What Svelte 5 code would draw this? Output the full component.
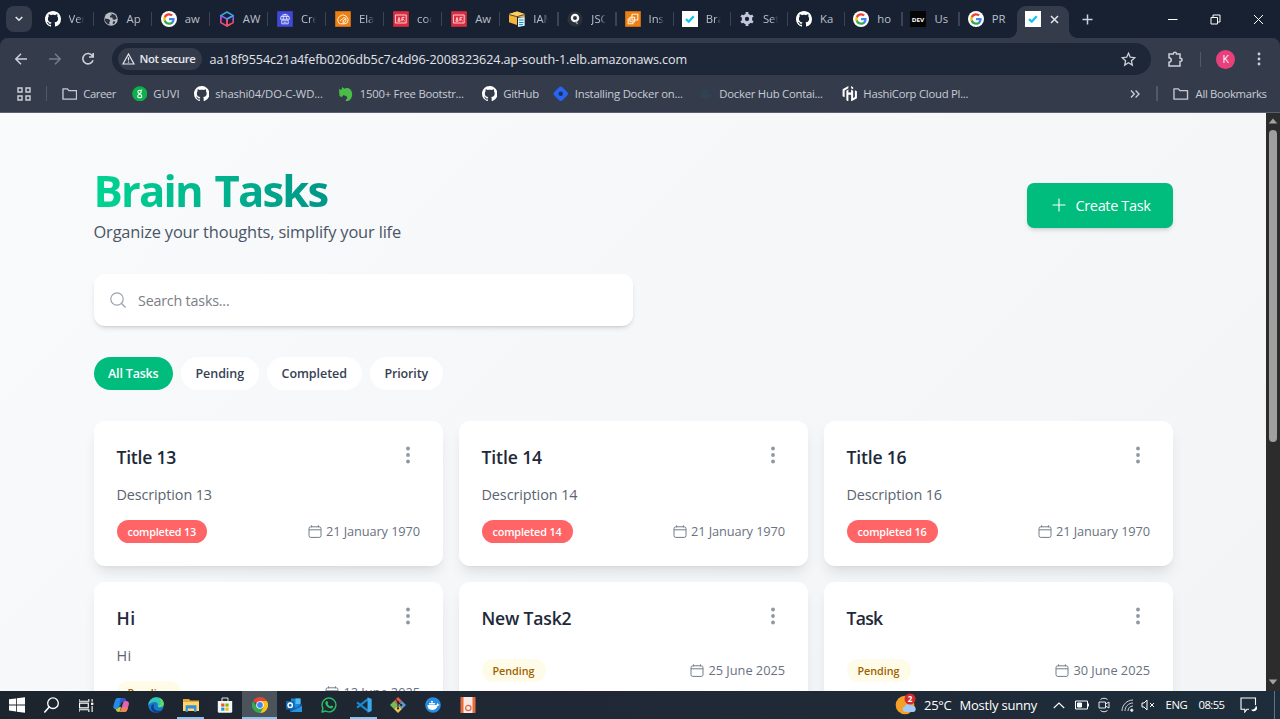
<script>
  const tabs = [
    ['github', 'Ver'], ['globe', 'Ap'], ['google', 'aw'], ['cube', 'AW'], ['elb', 'Cre'],
    ['elastic', 'Ela'], ['code', 'coc'], ['code', 'Aw'], ['iam', 'IAM'], ['json', 'JSC'],
    ['ec2', 'Ins'], ['check', 'Bra'], ['gear', 'Set'], ['github', 'Ka'], ['google', 'ho'],
    ['dev', 'Us'], ['google', 'PR']
  ];
  const bookmarks = [
    { icon: 'folder', label: 'Career', w: 32.5, x: 62 },
    { icon: 'guvi', label: 'GUVI', w: 26.5, x: 132 },
    { icon: 'github', label: 'shashi04/DO-C-WD...', w: 107.5, x: 194 },
    { icon: 'horse', label: '1500+ Free Bootstr...', w: 104, x: 338.5 },
    { icon: 'github', label: 'GitHub', w: 35.5, x: 482 },
    { icon: 'diamond', label: 'Installing Docker on...', w: 108, x: 553.5 },
    { icon: 'whale', label: 'Docker Hub Contai...', w: 103.5, x: 698 },
    { icon: 'hashi', label: 'HashiCorp Cloud Pl...', w: 105, x: 842 }
  ].map((b, i, all) => ({ ...b, slot: (all[i + 1]?.x ?? 1000) - b.x }));

  const filters = [
    { label: 'All Tasks', w: 50.5, box: 79.5 },
    { label: 'Pending', w: 48.5, box: 78.5 },
    { label: 'Completed', w: 65.5, box: 95.5 },
    { label: 'Priority', w: 43.5, box: 73.5 }
  ];
  const tasks = [
    { title: 'Title 13', tw: 59.5, desc: 'Description 13', dw: 95.5, badge: 'completed 13', bw: 68.5, done: true, date: '21 January 1970', w: 94 },
    { title: 'Title 14', tw: 60.5, desc: 'Description 14', dw: 96, badge: 'completed 14', bw: 69, done: true, date: '21 January 1970', w: 94 },
    { title: 'Title 16', tw: 60, desc: 'Description 16', dw: 95.5, badge: 'completed 16', bw: 69, done: true, date: '21 January 1970', w: 94 },
    { title: 'Hi', tw: 19, desc: 'Hi', dw: 15, badge: 'Pending', bw: 42, date: '12 June 2025', w: 76.5 },
    { title: 'New Task2', tw: 90, desc: '', dw: 0, badge: 'Pending', bw: 42, date: '25 June 2025', w: 76.5 },
    { title: 'Task', tw: 36, desc: '', dw: 0, badge: 'Pending', bw: 42, date: '30 June 2025', w: 76.5 }
  ];
  const apps = ['windows', 'lens', 'taskview', 'copilot', 'edge', 'explorer', 'store', 'chrome', 'outlook', 'whatsapp', 'vscode', 'git', 'docker', 'ubuntu'];
  const open = ['explorer', 'chrome', 'vscode'];

  // Tracks the letters so that a label occupies the given width.
  function fit(node, width) {
    if (!width) return;
    const natural = node.getBoundingClientRect().width;
    node.style.letterSpacing = `${(width - natural) / node.textContent.length}px`;
  }
</script>

{#snippet icon(name, size = 16)}
  <svg class="icon" width={size} height={size} viewBox="0 0 16 16" fill="none" stroke-linecap="round" stroke-linejoin="round">
    {#if name === 'github'}
      <path fill="#fff" d="M8 0C3.58 0 0 3.58 0 8c0 3.54 2.29 6.53 5.47 7.59.4.07.55-.17.55-.38 0-.19-.01-.82-.01-1.49-2.01.37-2.53-.49-2.69-.94-.09-.23-.48-.94-.82-1.13-.28-.15-.68-.52-.01-.53.63-.01 1.08.58 1.23.82.72 1.21 1.87.87 2.33.66.07-.52.28-.87.51-1.07-1.78-.2-3.64-.89-3.64-3.95 0-.87.31-1.59.82-2.15-.08-.2-.36-1.02.08-2.12 0 0 .67-.21 2.2.82.64-.18 1.32-.27 2-.27s1.36.09 2 .27c1.53-1.04 2.2-.82 2.2-.82.44 1.1.16 1.92.08 2.12.51.56.82 1.27.82 2.15 0 3.07-1.87 3.75-3.65 3.95.29.25.54.73.54 1.48 0 1.07-.01 1.93-.01 2.2 0 .21.15.46.55.38A8.01 8.01 0 0016 8c0-4.42-3.58-8-8-8z" />
    {:else if name === 'globe'}
      <circle cx="8" cy="8" r="6.8" fill="#b9bdc5" />
      <path fill="#293142" d="M1.8 7.6l3.6.3 2 1.6-1 1.4v2.7C3.6 13 1.6 10.4 1.8 7.6zM8.2 2.5l4 1.6 1.6 3.4-2 1.2-2-.3-.5-1.8-2.1-.2-.3-1.6 1.8-.5zM10 10.3l2.4.2-.9 1.9-1.8.9z" />
    {:else if name === 'google'}
      <circle cx="8" cy="8" r="8" fill="#fff" />
      <g transform="translate(1.7 1.6) scale(.53)">
        <path fill="#4285f4" d="M22.56 12.25c0-.78-.07-1.53-.2-2.25H12v4.26h5.92a5.06 5.06 0 01-2.2 3.32v2.77h3.57c2.08-1.92 3.27-4.74 3.27-8.1z" />
        <path fill="#34a853" d="M12 23c2.97 0 5.46-.98 7.28-2.66l-3.57-2.77c-.98.66-2.23 1.06-3.71 1.06-2.86 0-5.29-1.93-6.16-4.53H2.18v2.84A11 11 0 0012 23z" />
        <path fill="#fbbc05" d="M5.84 14.1a6.6 6.6 0 010-4.2V7.06H2.18a11 11 0 000 9.88z" />
        <path fill="#ea4335" d="M12 5.38c1.62 0 3.06.56 4.21 1.64l3.15-3.15A11 11 0 002.18 7.06L5.84 9.9C6.71 7.3 9.14 5.38 12 5.38z" />
      </g>
    {:else if name === 'cube'}
      <path stroke="#ed4b9b" stroke-width="1.5" d="M8 8v7l-6.2-3.4V4.7M8 15l3-1.6" />
      <path stroke="#f0525a" stroke-width="1.5" d="M8 8v7l6.2-3.4V9" />
      <path stroke="#9c5af0" stroke-width="1.5" d="M1.8 8V4.7L8 8l6.2-3.4V9" />
      <path stroke="#35a9ee" stroke-width="1.5" d="M1.8 4.6L8 1l6.2 3.6L8 8" />
    {:else if name === 'elb'}
      <path fill="#4148d5" d="M.2.2h15.6v15.6H.2z" />
      <g stroke="#dfe5ff" stroke-width=".9"><path d="M3.5 7.8a4.5 4.5 0 019 0zM6.3 7.8c0-2 .5-3.4 1.7-4.4 1.2 1 1.7 2.4 1.7 4.4M4.2 5.6h7.6M4.8 9.6v3.2h6.4V9.6zM6.8 11.2h2.4" /></g>
    {:else if name === 'elastic'}
      <path fill="#ee7f12" d="M.2.2h15.6v15.6H.2z" />
      <path stroke="#fff2dd" stroke-width="1" d="M4 12.3a5.1 5.1 0 118.4-.6L10 12.8H6zM5.2 9.6L9 6.6l1.9.8v2.7l-2.6 2.2M8.2 9.6V12M8.2 9.6l2.6-2" />
    {:else if name === 'code'}
      <path fill="#dc2d40" d="M.2.2h15.6v15.6H.2z" />
      <path stroke="#ffdfe3" stroke-width=".9" d="M2.8 4h10.4v8H2.8zM5 9.8l1-3.4 1 3.4zM9 9.8V6.4h2M9 8.3h1.6M11.2 9.8v.1" />
    {:else if name === 'iam'}
      <path fill="#f5b536" d="M0 3l8-2.5L15.6 3v3H8v8L0 11.3z" />
      <path fill="#ffcf61" d="M0 3L8 .5 15.6 3 8 5z" />
      <path stroke="#293142" stroke-width=".8" d="M.5 3.7L8 5.7l7-2" />
      <path fill="#d9f1fc" d="M9 6.8l6.7-.8v8.8L9 16z" />
      <path stroke="#168fcb" d="M10.5 9h3.6M10.5 11.5h3.6M10.5 13.6h3" />
    {:else if name === 'json'}
      <circle cx="8" cy="8" r="7.6" fill="#2b303b" /><circle cx="8" cy="7" r="3.1" stroke="#f6f7fa" stroke-width="2.3" /><path stroke="#aaa" stroke-width="1.4" d="M9 10.8l1.2 1.6" />
    {:else if name === 'ec2'}
      <path fill="#ee7f12" d="M.2.2h15.6v15.6H.2z" />
      <path stroke="#fff2df" stroke-width="1.1" d="M7 3.2h5.8V9H7zM5 6.2h4.6v4.6H5zM5 8H3.2v4.8H8v-2" />
    {:else if name === 'check'}
      <path fill="#fff" d="M0 0h16v16H0z" /><path stroke="#12c4ed" stroke-width="2.3" stroke-linecap="butt" d="M4 8.2l2.7 2.5 5-5.4" />
    {:else if name === 'gear'}
      <circle cx="8" cy="8" r="3.7" stroke="#c2c7dc" stroke-width="3.1" />
      <path stroke="#c2c7dc" stroke-width="2.8" stroke-linecap="butt" d="M8 1.1v3M8 12v3M2.1 4.6l2.6 1.5M11.3 9.9l2.6 1.5M2.1 11.4l2.6-1.5M11.3 6.1l2.6-1.5" />
    {:else if name === 'dev'}
      <path fill="#050505" d="M0 0h16v16H0z" /><text x="8" y="10.6" class="dev" textLength="12.5" lengthAdjust="spacingAndGlyphs">DEV</text>
    {:else if name === 'folder'}
      <path stroke="#c5cad4" stroke-width="1.4" d="M1 3h4.6l1.5 1.8H15v8.8H1z" />
    {:else if name === 'guvi'}
      <circle cx="8" cy="8" r="7.8" fill="#0db14b" /><circle cx="7.8" cy="6" r="1.7" stroke="#fff" stroke-width="1.1" /><ellipse cx="8" cy="10.5" rx="2.1" ry="1.7" stroke="#fff" stroke-width="1.1" /><path stroke="#fff" d="M9.3 4.7l.9-.7" />
    {:else if name === 'horse'}
      <path fill="#49bd47" d="M1 3.2L3.3 4 4.5 1.1 6.6 2.8C10.8.7 14.8 4 14.6 8.8c-.1 3.6-2 6.2-4.7 6.9-1 .1-2-.3-2.4-1.2 1.7-.7 2.3-2 1.6-3.7L5.8 9.2 3.6 11.5 1.5 10z" />
    {:else if name === 'diamond'}
      <rect x="2.7" y="2.7" width="10.6" height="10.6" rx="1.8" transform="rotate(45 8 8)" fill="#2864f5" stroke="#2864f5" stroke-width="1.2" /><circle cx="8" cy="8" r="2.3" fill="#1c3254" />
    {:else if name === 'whale'}
      <path fill="#2f4256" d="M2 8h2V6h2V4h4v4h4c-1 4-4 5-7 5-3.5 0-5-2-5-5z" />
    {:else if name === 'hashi'}
      <path fill="#fff" d="M6.6 0v2.3L2.7 4.6v7.1L.6 10.5V3.4zM4.5 4.9l2.1-1.2v3.1h2.8V3.7l2.1 1.2v8.2l-2.1 1.2V9H6.6v5.3l-2.1-1.2zM9.4 16v-2.3l3.9-2.3V4.3l2.1 1.2v7.1zM9.4 0l2.1 1.2v2.2L9.4 2.3zM6.6 16l-2.1-1.2v-2.2l2.1 1.1z" />
    {:else if name === 'windows'}
      <path fill="#fff" d="M0 2.3l7-.9v6.1H0zM7.8 1.3L16 .2v7.3H7.8zM0 8.4h7v6.2l-7-1zM7.8 8.4H16v7.4l-8.2-1.1z" />
    {:else if name === 'lens'}
      <circle cx="9" cy="6.2" r="5.3" stroke="#fff" stroke-width="1.3" /><path stroke="#fff" stroke-width="1.6" d="M5.2 10L.8 15" />
    {:else if name === 'taskview'}
      <path stroke="#fff" stroke-width="1.2" stroke-linecap="butt" stroke-linejoin="miter" d="M0 1v2.5h10.5V1M0 15v-2.5h10.5V15M.6 5.5h9.3v5H.6zM14 1v3M14 8.5V15" /><path fill="#fff" d="M12.8 5h2.5v2.4h-2.5z" />
    {:else if name === 'copilot'}
      <path fill="#238ce7" d="M5 1h5.2c-2.5.7-2.6 4.6-3.4 7.2C6 11 5 12 2.6 12 .5 12 0 10.5.5 8.2L2.2 3C2.8 1.5 3.6 1 5 1z" />
      <path fill="#3454c8" d="M8 1h3c1.3 0 1.7.8 2.1 2.3L13.6 5h-3.3C8.2 5 8 7 7.3 9L6.5 5z" />
      <path fill="#e065b5" d="M13 4c2.5 0 3.4 1.4 2.7 4l-1.5 5c-.7 1.4-1.5 2-3 2H6c2.5-.7 2.6-4.3 3.4-7C10.1 5.4 10.8 4 13 4z" />
      <path fill="#f2854d" d="M8.5 10.5h6.4l-.7 2.5c-.7 1.4-1.5 2-3 2H6c1.3-.4 2-2 2.5-4.5z" />
      <path fill="#b9cf46" d="M1 11.3c2 .8 4.2.6 5.2-1.3L8 9.8 7.4 13c-.3 1.2-.8 1.8-1.9 2C4 15 3.2 14 2.6 12z" />
    {:else if name === 'edge'}
      <circle cx="8" cy="8" r="7.8" fill="#1578d0" />
      <path fill="#35c7b0" d="M.3 8C.9 3.3 4.3.2 8.4.2c4.7 0 7.5 3.4 7.4 6.5 0 2.3-1.6 3.6-3.8 3.6-1.6 0-2.5-.6-2.2-1.6C11 5.3 5.5 2.7.3 8z" />
      <path fill="#123f83" d="M6 7.3C4 12 8.2 15 13.5 13.4 10 17.5 3.5 15.8 3 10.5 2.9 8.7 4.2 7.5 6 7.3z" />
      <path fill="#68d95b" d="M11.5 1c3 1.5 4.6 4 4.1 6.5-.4 1.8-2 2.8-3.7 2.8-1.4 0-2.2-.5-2-1.4 3.2-.8 3.7-4.7 1.6-7.9z" />
    {:else if name === 'explorer'}
      <path fill="#e9a735" d="M0 2h6l1.3 1.5H16V14H0z" /><path fill="#ffd66b" d="M0 5h16v9H0z" /><path fill="#348fdb" d="M2.6 8.2h10.8v6.7h-2.2v-3.4H4.8v3.4H2.6z" />
    {:else if name === 'store'}
      <path fill="#f4f5f7" d="M.8 4h14.4v10.5c0 .8-.4 1.2-1.2 1.2H2c-.8 0-1.2-.4-1.2-1.2z" /><path stroke="#dbe7f2" d="M5 4V1h6v3" /><path fill="#f25022" d="M4.2 6.5h3.2v3.1H4.2z" /><path fill="#7fba00" d="M8.4 6.5h3.2v3.1H8.4z" /><path fill="#00a4ef" d="M4.2 10.6h3.2v3.1H4.2z" /><path fill="#ffb900" d="M8.4 10.6h3.2v3.1H8.4z" />
    {:else if name === 'chrome'}
      <path fill="#e94335" d="M8 8L1.2 4A7.9 7.9 0 0114.9 4z" /><path fill="#fbc116" d="M8 4h6.9A7.9 7.9 0 018 16l3.5-6z" /><path fill="#34a853" d="M1.1 4L5 10l6.2.5L8 16A7.9 7.9 0 011.1 4z" /><circle cx="8" cy="8" r="3.8" fill="#fff" /><circle cx="8" cy="8" r="2.9" fill="#4285f4" />
    {:else if name === 'outlook'}
      <path fill="#1689db" d="M5 1.5h9.5V12H5z" /><path fill="#50bdf1" d="M9.5 1.5h5V7h-5z" /><path fill="#0f5da8" d="M4 7l6 4 6-4v8H4z" /><path fill="#2694de" d="M4 15l12-6v6z" /><path fill="#1267b5" d="M0 4h8.5v8.5H0z" /><circle cx="4.2" cy="8.2" r="2.2" stroke="#fff" stroke-width="1.4" />
    {:else if name === 'whatsapp'}
      <path stroke="#2dbd66" stroke-width="1.4" d="M1 15l1-3.7A6.9 6.9 0 114.8 14z" /><path fill="#2dbd66" d="M5.3 4.2l1-.1 1 2-.7 1c.6 1 1.4 1.8 2.6 2.3l1-1 1.9.9c.2 1.3-.8 2.3-2.2 2.2C7 11.1 4.5 8.5 4.3 6.1c0-.9.4-1.6 1-1.9z" />
    {:else if name === 'vscode'}
      <path stroke="#1689d1" stroke-width="2.2" stroke-linecap="butt" d="M1 5.3l11 8.6M1 10.7l11-8.6" /><path fill="#37a9ed" d="M11.5.2L15.7 2v12l-4.2 1.8z" />
    {:else if name === 'git'}
      <path fill="#e85b4c" d="M8 0l4 4-4 4-4-4z" /><path fill="#77bd57" d="M4 4l4 4-4 4-4-4z" /><path fill="#5a9bd5" d="M12 4l4 4-4 4-4-4z" /><path fill="#e9c94d" d="M8 8l4 4-4 4-4-4z" /><path stroke="#25292c" stroke-width="1.1" d="M6.1 2.5L8 5v6.5M8 5l3.3 3.2" /><g fill="#25292c"><circle cx="8" cy="5" r="1.1" /><circle cx="8" cy="11.5" r="1.1" /><circle cx="11.3" cy="8.2" r="1.1" /></g>
    {:else if name === 'docker'}
      <circle cx="8" cy="8" r="7.8" fill="#268de3" /><path fill="#fff" d="M2.5 8h9c.2-1 .7-1.6 1-2 .7.5.8 1 .8 1.5h1.3c-.4 1-1.1 1.4-2 1.4-.8 2.6-2.8 4-5.6 4-3 0-4.5-1.7-4.5-4.9zM4 6h5.9v1.5H4zM6 4h2v1.5H6z" />
    {:else if name === 'ubuntu'}
      <path fill="#e86b3d" d="M.5 0h15v16H.5z" /><path fill="#f6e8e3" d="M3.5 0h9v16h-9z" /><circle cx="8.3" cy="11" r="2.7" stroke="#d96a45" stroke-width="1.2" />
    {/if}
  </svg>
{/snippet}

<div class="screen">
  <div class="tabs">
    <button class="chev" aria-label="Search tabs"><svg width="10" height="8" viewBox="0 0 10 8" fill="none"><path d="M1.7 2L5 5.2 8.3 2" stroke="#e4e6ec" stroke-width="1.6" /></svg></button>
    {#each tabs as [name, label], i}
      <div class="tab" class:wide={i < 9} class:last={i === 16}>{@render icon(name)}<span class="tablabel" class:faded={label.length > 2}>{label}</span>{#if i < 16}<i></i>{/if}</div>
    {/each}
    <div class="active">{@render icon('check')}<svg width="9" height="9" viewBox="0 0 9 9"><path d="M1 1l7 7M8 1L1 8" stroke="#e4e6ec" stroke-width="1.5" /></svg></div>
    <svg class="plus" width="11" height="11" viewBox="0 0 11 11"><path d="M5.5.5v10M.5 5.5h10" stroke="#cbd0da" stroke-width="1.5" /></svg>
    <div class="window">
      <svg width="11" height="11" viewBox="0 0 11 11"><path d="M1 5.5h9.5" stroke="#fff" /></svg>
      <svg width="11" height="11" viewBox="0 0 11 11" fill="none" stroke="#fff"><path d="M1 3.5h6.5V10H1zM3 3V1h7v7H8" /></svg>
      <svg width="11" height="11" viewBox="0 0 11 11"><path d="M1 1l9 9M10 1l-9 9" stroke="#fff" /></svg>
    </div>
  </div>

  <div class="chrome">
    <div class="toolbar">
      <svg width="14" height="14" viewBox="0 0 14 14" fill="none" stroke="#cbd0da" stroke-width="1.5"><path d="M13 7H2M7 1.8L1.8 7 7 12.2" /></svg>
      <svg width="14" height="14" viewBox="0 0 14 14" fill="none" stroke="#767d8b" stroke-width="1.5"><path d="M1 7h11M7 1.8L12.2 7 7 12.2" /></svg>
      <svg width="14" height="14" viewBox="0 0 14 14" fill="none" stroke="#cbd0da" stroke-width="1.6"><path d="M11.5 4A5.2 5.2 0 1012 8.3M12.2 1v4H8" /></svg>
      <div class="address">
        <div class="insecure">
          <svg width="13" height="12" viewBox="0 0 13 12" fill="none" stroke="#e4e7ed" stroke-width="1.2"><path d="M6.5 1L12 11H1zM6.5 4.2v3.3M6.5 8.5v1.2" /></svg>
          <span use:fit={56}>Not secure</span>
        </div>
        <span class="url"><span use:fit={477.5}>aa18f9554c21a4fefb0206db5c7c4d96-2008323624.ap-south-1.elb.amazonaws.com</span></span>
        <svg class="star" width="15" height="15" viewBox="0 0 15 15" fill="none" stroke="#cbd0da" stroke-width="1.3"><path d="M7.5 1.2l1.8 4 4.4.5-3.3 3 .9 4.4-3.8-2.3-3.8 2.3.9-4.4-3.3-3 4.4-.5z" /></svg>
      </div>
      <svg class="puzzle" width="17" height="17" viewBox="0 0 17 17" fill="none" stroke="#cbd0da" stroke-width="1.5"><path d="M2 3h4.3c0-2.5 3.2-2.5 3.2 0H13v4.2c2.7 0 2.7 3.2 0 3.2V15H2v-3.8c3-.4 3-4.2 0-4.5z" /></svg>
      <b class="divider"></b>
      <span class="avatar">K</span>
      <svg width="4" height="16" viewBox="0 0 4 16" fill="#cbd0da"><circle cx="2" cy="3" r="1.4" /><circle cx="2" cy="8" r="1.4" /><circle cx="2" cy="13" r="1.4" /></svg>
    </div>
    <div class="bookmarks">
      <svg class="grid4" width="14" height="14" viewBox="0 0 14 14" fill="none" stroke="#cbd0da" stroke-width="1.4"><path d="M1 1h4v4H1zM9 1h4v4H9zM1 9h4v4H1zM9 9h4v4H9z" /></svg>
      <b class="divider first"></b>
      {#each bookmarks as b}
        <div class="bookmark" style:width="{b.slot}px">{@render icon(b.icon, 15.5)}<span use:fit={b.w}>{b.label}</span></div>
      {/each}
      <svg class="more" width="10" height="10" viewBox="0 0 10 10" fill="none" stroke="#cbd0da" stroke-width="1.3"><path d="M1 1.5L4.3 5 1 8.5M5.6 1.5L9 5 5.6 8.5" /></svg>
      <b class="divider"></b>
      <div class="bookmark all">{@render icon('folder', 15.5)}<span use:fit={71}>All Bookmarks</span></div>
    </div>
  </div>

  <div class="view">
    <main>
      <header>
        <div>
          <h1><span use:fit={234}>Brain Tasks</span></h1>
          <p><span use:fit={307.5}>Organize your thoughts, simplify your life</span></p>
        </div>
        <button class="create">
          <svg width="14" height="14" viewBox="0 0 14 14"><path d="M7 .5v13M.5 7h13" stroke="#fff" stroke-width="1.1" /></svg>
          <span use:fit={75}>Create Task</span>
        </button>
      </header>
      <div class="search">
        <svg width="16" height="16" viewBox="0 0 16 16" fill="none" stroke="#99a1af" stroke-width="1.2"><circle cx="7" cy="7" r="6.2" /><path d="M11.5 11.5l4 4" /></svg>
        <span use:fit={91.5}>Search tasks...</span>
      </div>
      <nav>
        {#each filters as f, i}
          <button class:on={i === 0} style:width="{f.box}px"><span use:fit={f.w}>{f.label}</span></button>
        {/each}
      </nav>
      <section>
        {#each tasks as t}
          <article>
            <div class="top">
              <h2><span use:fit={t.tw}>{t.title}</span></h2>
              <svg width="4" height="18" viewBox="0 0 4 18" fill="#8f97a3"><circle cx="2" cy="2.5" r="1.9" /><circle cx="2" cy="9" r="1.9" /><circle cx="2" cy="15.5" r="1.9" /></svg>
            </div>
            {#if t.desc}<p class="desc"><span use:fit={t.dw}>{t.desc}</span></p>{:else}<p class="desc none"></p>{/if}
            <div class="meta">
              <span class="badge" class:done={t.done}><span use:fit={t.bw}>{t.badge}</span></span>
              <span class="date">
                <svg width="14" height="13" viewBox="0 0 14 13" fill="none" stroke="#737c8a" stroke-width="1"><rect x="1" y="1.8" width="12" height="10.6" rx="1.8" /><path d="M1 4.8h12M3.6.3v2M10.4.3v2" /></svg>
                <span use:fit={t.w}>{t.date}</span>
              </span>
            </div>
          </article>
        {/each}
      </section>
    </main>
    <div class="scroll">
      <svg width="10" height="6" viewBox="0 0 10 6"><path d="M5 .5L9.3 5.5H.7z" fill="#a3a3a3" /></svg>
      <div class="thumb"></div>
      <svg width="10" height="6" viewBox="0 0 10 6"><path d="M.7.5h8.6L5 5.5z" fill="#a3a3a3" /></svg>
    </div>
  </div>

  <footer>
    {#each apps as a}
      <div class="app" class:open={open.includes(a)} class:current={a === 'chrome'}>{@render icon(a, a === 'taskview' ? 15 : 16)}</div>
    {/each}
    <div class="tray">
      <svg class="weather" width="22" height="22" viewBox="0 0 22 22"><circle cx="10" cy="12" r="9.3" fill="#f5a027" /><path d="M10 19a3 3 0 01-.2-5.8 4 4 0 017-.7A3.2 3.2 0 0118 19z" fill="#a5c9f5" /><circle cx="15" cy="6" r="5.5" fill="#d42a2a" /><text x="15" y="9" class="count">2</text></svg>
      <span class="temp" use:fit={27.5}>25°C</span>
      <span class="sunny" use:fit={77.5}>Mostly sunny</span>
      <svg class="up" width="12" height="7" viewBox="0 0 12 7" fill="none" stroke="#fff" stroke-width="1.1"><path d="M.8 6L6 1l5.2 5" /></svg>
      <svg class="battery" width="15" height="10" viewBox="0 0 15 10" fill="none" stroke="#fff"><path d="M.5 1h12v8H.5zM13.5 3.5v3" /><path fill="#fff" d="M2.5 3h4v4h-4z" /></svg>
      <svg class="meet" width="12" height="16" viewBox="0 0 12 16" fill="none" stroke="#e5e8ec"><path d="M2.5 2.5c2-1.7 5-1.7 7 0M2.5 13.5c2 1.7 5 1.7 7 0M1 5h6.5v6H1zM7.5 7L11 5v6L7.5 9" /></svg>
      <svg class="wifi" width="13" height="13" viewBox="0 0 13 13" fill="none" stroke="#ced2d7"><path d="M1 12C1 6 6 1 12 1M4 12c0-4.5 3.5-8 8-8M7 12c0-3 2-5 5-5" /><circle cx="10.8" cy="11.2" r="1.2" fill="#fff" /></svg>
      <svg class="mute" width="14" height="12" viewBox="0 0 14 12" fill="none" stroke="#fff"><path d="M1 4h2l3-3v10L3 8H1zM9 4l4 4M13 4L9 8" /></svg>
      <span class="lang" use:fit={22}>ENG</span>
      <span class="clock" use:fit={26}>08:55</span>
      <svg width="17" height="16" viewBox="0 0 17 16" fill="none" stroke="#fff" stroke-width="1.1"><path d="M9 12.2H7L4.8 15v-2.8H1V1h14.5v7" /><path fill="#fff" stroke="none" d="M15.8 8.5a3.3 3.3 0 11-5 4.1 4 4 0 005-4.1z" /></svg>
      <b></b>
    </div>
  </footer>
</div>

<style>
  :global(body) { margin: 0; overflow: hidden; }
  * { box-sizing: border-box; }
  .screen { width: 1280px; height: 719px; display: flex; flex-direction: column; overflow: hidden; font-family: "Open Sans", "Noto Sans", sans-serif; background: #182131; }
  span { white-space: nowrap; }
  svg { flex: none; display: block; }
  button { border: 0; padding: 0; font-family: inherit; }
  h1, h2, p { margin: 0; }
  .tabs { height: 38px; flex: none; display: flex; align-items: center; background: #182131; color: #bac0cb; font-size: 11.3px; }
  .chev { width: 26px; height: 26px; margin: 0 12.5px 0 6px; border-radius: 8px; background: #343c4c; display: grid; place-items: center; flex: none; }
  .tab { width: 57.2px; height: 38px; flex: none; display: flex; align-items: center; }
  .tab.wide { width: 58.1px; }
  .tab.last { width: 49.5px; }
  .tablabel { width: 15px; margin-left: 8px; line-height: 17px; padding-bottom: 1px; }
  .tablabel.faded { mask-image: linear-gradient(90deg, #000 9px, transparent 15px); }
  .tab i { margin-left: 9px; width: 1.3px; height: 14px; background: #3b4455; }
  .active { height: 32px; width: 51.5px; flex: none; margin: 6px 0 0; padding-left: 7.5px; display: flex; gap: 9px; align-items: center; padding-bottom: 6px; background: #343c4c; border-radius: 9px 9px 0 0; position: relative; }
  .active::before, .active::after { content: ""; position: absolute; bottom: 0; width: 8px; height: 8px; }
  .active::before { left: -8px; background: radial-gradient(circle at 0 0, transparent 7.5px, #343c4c 8px); }
  .active::after { right: -8px; background: radial-gradient(circle at 100% 0, transparent 7.5px, #343c4c 8px); }
  .plus { margin-left: 13.5px; }
  .window { margin-left: auto; margin-right: 16px; display: flex; gap: 32px; }
  .chrome { height: 75px; flex: none; background: #343c4c; border-radius: 8px 8px 0 0; border-bottom: 1px solid #596170; }
  .toolbar { height: 42px; display: flex; align-items: center; padding: 0 19px 0 14px; }
  .toolbar > svg:nth-child(-n+2) { margin-right: 19.5px; }
  .address { height: 32px; width: 1038.5px; flex: none; margin-left: 17px; padding: 0 15px 0 6px; background: #1e2737; border-radius: 16px; display: flex; align-items: center; }
  .insecure { width: 84px; height: 22px; border-radius: 11px; padding-left: 4px; display: flex; gap: 4.5px; align-items: center; color: #e5e8ed; font-size: 11.3px; line-height: 20px; font-weight: 600; background: #343c4c; }
  .url { margin-left: 7.5px; font-size: 12.6px; color: #e1e4ea; }
  .star { margin-left: auto; }
  .puzzle { margin-left: 16.5px; }
  .divider { width: 1.3px; height: 15px; background: #515969; margin-left: 16px; }
  .avatar { width: 19px; height: 19px; margin: 0 22px 0 15px; border-radius: 50%; background: #e93f7b; color: #fff; display: grid; place-items: center; font-size: 10.5px; }
  .bookmarks { height: 27px; display: flex; align-items: center; color: #c8ccd5; font-size: 11.3px; }
  .grid4 { margin-left: 17px; }
  .divider.first { margin: 0 15px 0 14.5px; }
  .bookmark { display: flex; align-items: center; gap: 6px; flex: none; }
  .bookmark span { line-height: 16px; }
  .more { margin-left: 130.5px; }
  .all { margin-left: 15.5px; gap: 7px; }
  .view { height: 578px; flex: none; display: flex; overflow: hidden; }
  main { width: 1266px; padding: 53.5px 93px 0 93.5px; background: linear-gradient(135deg, #f9fafb, #f3f4f6); overflow: hidden; }
  header { display: flex; justify-content: space-between; height: 107.5px; }
  h1 { height: 50px; font-size: 43.6px; line-height: 47px; font-weight: 700; }
  h1 span { display: inline-block; word-spacing: 3px; background: linear-gradient(90deg, #00d492, #009689); background-clip: text; color: transparent; }
  header p { font-size: 16.4px; line-height: 29px; color: #4a5565; }
  .create { width: 146.5px; height: 45px; margin-top: 16px; background: #00bc7d; color: #fff; border-radius: 7px; display: flex; align-items: center; padding-left: 25px; gap: 10px; font-size: 14.5px; box-shadow: 0 3px 5px -1px #0002, 0 2px 3px -2px #0002; }
  .search { width: 539.5px; height: 52px; background: #fff; border-radius: 11px; box-shadow: 0 3px 5px -1px #0002, 0 2px 3px -2px #0002; padding-left: 16.5px; display: flex; align-items: center; gap: 12px; font-size: 14.3px; color: #7b7e84; }
  nav { display: flex; gap: 7.5px; margin: 30.5px 0 31px; }
  nav button { height: 33px; border-radius: 17px; background: #fff; color: #364153; font-size: 12.5px; font-weight: 600; }
  nav button.on { background: #00bc7d; color: #fff; }
  section { display: grid; grid-template-columns: repeat(3, 1fr); gap: 16px; padding-left: .5px; }
  article { height: 145px; background: #fff; border-radius: 11px; padding: 23.5px 23px 21px 22.5px; box-shadow: 0 9px 14px -3px #0000001a, 0 3px 5px -4px #0000001a; }
  .top { display: flex; justify-content: space-between; height: 36.5px; }
  .top svg { margin: 2px 10px 0 0; }
  h2 { font-size: 17.6px; line-height: 27px; font-weight: 600; color: #1e2939; }
  .desc { height: 39.3px; line-height: 28px; font-size: 14.4px; color: #5a6472; }
  .desc.none { height: 17.3px; }
  .meta { height: 23px; display: flex; justify-content: space-between; align-items: center; }
  .badge { height: 23px; padding: 0 11px; border-radius: 12px; background: #fefce8; color: #a26100; font-size: 10.8px; font-weight: 600; line-height: 23px; }
  .badge.done { background: #ff6467; color: #fff; }
  .date { display: flex; gap: 4.5px; align-items: center; color: #6a7282; font-size: 12.8px; }
  .scroll { width: 14px; background: #2c2c2c; display: flex; flex-direction: column; align-items: center; padding: 5px 0 6px; }
  .thumb { width: 8px; height: 312px; margin: 6px 0 auto; border-radius: 4px; background: #9f9f9f; }
  footer { height: 28px; flex: none; display: flex; background: linear-gradient(90deg, #1c252e, #202936 60%, #1d2d3b); }
  .app { width: 34.65px; height: 28px; flex: none; display: grid; place-items: center; position: relative; }
  .app.current { background: #4b535b; }
  .app.open::after { content: ""; position: absolute; bottom: 0; left: 4px; right: 4px; height: 2px; background: #83c5f4; }
  .app.current::after { left: 0; right: 0; }
  .tray { margin-left: auto; width: 385px; display: flex; align-items: center; color: #fff; font-size: 13px; }
  .weather { margin: 0 7px 2px 0; }
  .temp { margin-right: 8px; }
  .up { margin-left: 16px; }
  .battery { margin-left: 9.5px; }
  .meet { margin-left: 8.5px; }
  .wifi { margin-left: 11px; }
  .mute { margin-left: 7px; }
  .lang { margin-left: 10.5px; font-size: 11.3px; line-height: 15px; padding-bottom: 1px; }
  .clock { margin-left: 11px; font-size: 11.3px; line-height: 15px; padding-bottom: 1px; }
  .clock + svg { margin-left: 15.5px; }
  .tray b { width: 1px; height: 28px; margin-left: 17px; background: #65707b; }
  .dev { font: 700 6px "Open Sans", sans-serif; fill: #fff; text-anchor: middle; }
  .count { font: 700 8px "Open Sans", sans-serif; fill: #fff; text-anchor: middle; }
</style>
